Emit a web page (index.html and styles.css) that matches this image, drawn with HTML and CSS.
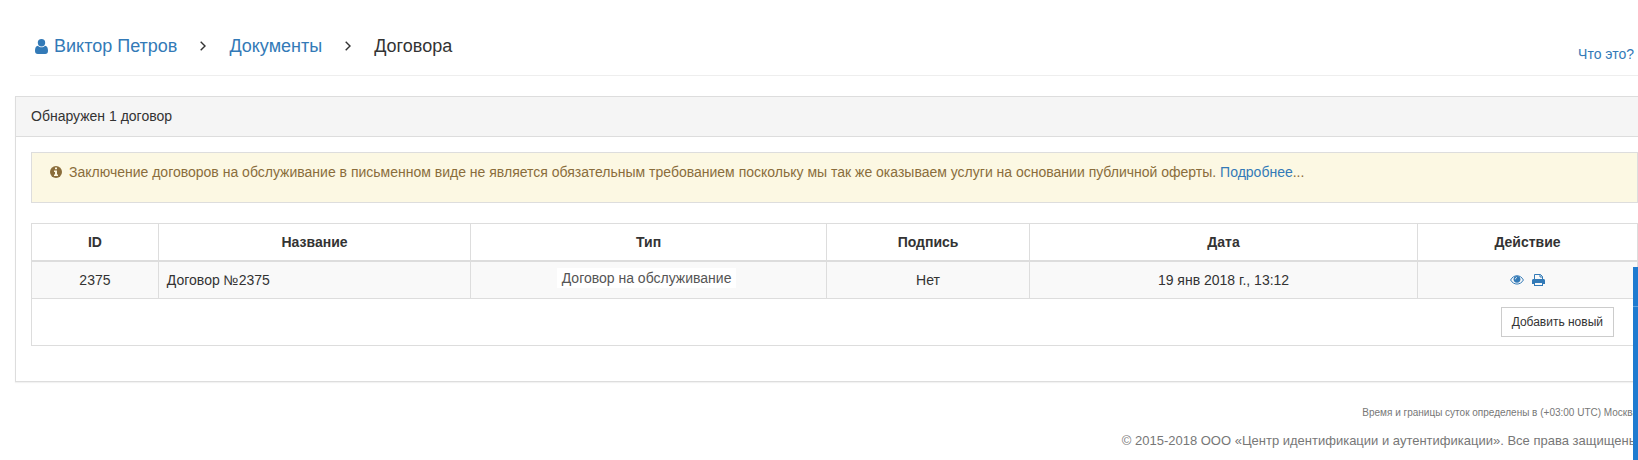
FILE: index.html
```html
<!DOCTYPE html>
<html lang="ru">
<head>
<meta charset="utf-8">
<title>Договора</title>
<link rel="stylesheet" href="styles.css">
</head>
<body>
<header class="page-header">
  <nav class="breadcrumb" aria-label="Навигация">
    <a class="user-link" href="#"><svg class="icon-user" viewBox="0 0 13 15" aria-hidden="true"><circle cx="6.5" cy="3.7" r="3.7"/><path d="M3 6.700C.8 6.900 0 9 0 11.800C0 14 1 15 2.800 15H10.200C12 15 13 14 13 11.800C13 9 12.200 6.900 10 6.700C8 8.700 5 8.700 3 6.700Z"/></svg>Виктор Петров</a>
    <svg class="chevron" viewBox="0 0 6 10" aria-hidden="true"><path d="M.7.7 5 5 .7 9.300"/></svg>
    <a href="#">Документы</a>
    <svg class="chevron" viewBox="0 0 6 10" aria-hidden="true"><path d="M.7.7 5 5 .7 9.300"/></svg>
    <span>Договора</span>
  </nav>
  <a class="help-link" href="#">Что это?</a>
</header>
<main class="panel">
  <div class="panel-heading">Обнаружен 1 договор</div>
  <div class="panel-body">
    <div class="alert">
      <svg class="icon-info" viewBox="0 0 12 12" aria-hidden="true"><circle cx="6" cy="6" r="6"/><path d="M5 1.500H7V3.200H5ZM4 4.500H7V8.500H8V10H4V8.500H5V6H4Z"/></svg>
      <p>Заключение договоров на обслуживание в письменном виде не является обязательным требованием поскольку мы так же оказываем услуги на основании публичной оферты. <a href="#">Подробнее</a>...</p>
    </div>
    <table class="contracts">
      <colgroup><col class="col-id"><col class="col-name"><col class="col-type"><col class="col-sign"><col class="col-date"><col class="col-action"></colgroup>
      <thead>
        <tr><th>ID</th><th>Название</th><th>Тип</th><th>Подпись</th><th>Дата</th><th>Действие</th></tr>
      </thead>
      <tbody>
        <tr>
          <td>2375</td>
          <td class="name">Договор №2375</td>
          <td class="type"><span class="type-label">Договор на обслуживание</span></td>
          <td>Нет</td>
          <td>19 янв 2018 г., 13:12</td>
          <td>
            <div class="actions">
              <a href="#" aria-label="Просмотр"><svg class="icon-eye" viewBox="0 0 14 10" aria-hidden="true"><path class="line" d="M.6 5C3.500-.7 10.500-.7 13.400 5C10.500 10.400 3.500 10.400.6 5Z"/><circle cx="7" cy="4.300" r="3.400"/><path class="glint" d="M5.300 4.300C5.300 3.200 6 2.600 7 2.600"/></svg></a>
              <a href="#" aria-label="Печать"><svg class="icon-print" viewBox="0 0 13 12" aria-hidden="true"><path class="line" d="M2.500 6V.5H8.500L10.500 2.500V6M8 .5V3H10.500"/><path fill-rule="evenodd" d="M1.500 5H11.500C12.400 5 13 5.600 13 6.500V10H11V12H2V10H0V6.500C0 5.600.6 5 1.500 5ZM3 9V11H10V9Z"/></svg></a>
            </div>
          </td>
        </tr>
      </tbody>
      <tfoot>
        <tr><td class="add-cell" colspan="6"><button class="btn" type="button">Добавить новый</button></td></tr>
      </tfoot>
    </table>
  </div>
</main>
<footer class="footer">
  <p class="timezone">Время и границы суток определены в (+03:00 UTC) Москва</p>
  <p class="copyright">© 2015-2018 ООО «Центр идентификации и аутентификации». Все права защищены</p>
</footer>
<div class="side-tab" aria-hidden="true"></div>
</body>
</html>
```
FILE: styles.css
```css
* { box-sizing: border-box; }

body {
  margin: 0;
  overflow: hidden;
  background: #fff;
  color: #333;
  font: 14px/20px "Liberation Sans", Arial, sans-serif;
}

p { margin: 0; }
a { color: #337ab7; text-decoration: none; }
svg { display: block; fill: currentColor; }
.line { fill: none; stroke: currentColor; }

.page-header {
  display: flex;
  justify-content: space-between;
  align-items: flex-end;
  margin-left: 30px;
  padding: 36px 4px 11px 5px;
  border-bottom: 1px solid #eee;
}

.breadcrumb {
  display: flex;
  align-items: center;
  gap: 23px;
  padding-bottom: 8px;
  font-size: 18px;
}

.user-link { display: flex; align-items: center; gap: 6px; }
.icon-user { width: 13px; height: 15px; }
.chevron { width: 6px; height: 10px; fill: none; stroke: #333; stroke-width: 1.4; }

.panel {
  margin: 20px -16px 0 15px;
  border: 1px solid #ddd;
  box-shadow: 0 1px 1px rgba(0, 0, 0, .05);
}

.panel-heading {
  padding: 9px 15px 10px;
  border-bottom: 1px solid #ddd;
  background: #f5f5f5;
}

.panel-body { padding: 15px 15px 35px; }

.alert {
  display: flex;
  gap: 7px;
  margin-bottom: 20px;
  padding: 9px 18px 20px;
  border: 1px solid #ddd;
  background: #fcf8e3;
  color: #8a6d3b;
}

.icon-info { flex: none; width: 12px; height: 12px; margin-top: 4px; }
.icon-info path { fill: #fcf8e3; }

.contracts {
  width: 100%;
  table-layout: fixed;
  border-collapse: collapse;
  text-align: center;
}

.contracts th, .contracts td { padding: 8px; border: 1px solid #ddd; }
.contracts th { border-bottom-width: 2px; }
.contracts tbody td { background: #f9f9f9; }
.contracts .name { text-align: left; }
.contracts .type { padding: 6px 12px 10px 8px; }
.type-label { display: inline-block; padding: 0 5px; background: #fff; color: #555; }

.col-id { width: 7.9%; }
.col-name { width: 19.45%; }
.col-type { width: 22.15%; }
.col-sign { width: 12.65%; }
.col-date { width: 24.15%; }
.col-action { width: 13.7%; }

.actions { display: flex; justify-content: center; align-items: center; gap: 8px; }
.icon-eye { width: 14px; height: 10px; }
.icon-print { width: 13px; height: 12px; }
.glint { fill: none; stroke: #f9f9f9; }

.contracts .add-cell { padding-right: 23px; text-align: right; }

.btn {
  display: inline-block;
  padding: 5px 10px;
  border: 1px solid #ccc;
  background: #fff;
  color: #333;
  font: 12px/18px "Liberation Sans", Arial, sans-serif;
  vertical-align: top;
}

.footer {
  padding-top: 21px;
  color: #777;
  text-align: right;
}

.timezone { font-size: 10px; white-space: nowrap; }
.copyright { padding-top: 8px; font-size: 13px; white-space: nowrap; }

.side-tab {
  position: fixed;
  right: 0;
  bottom: 0;
  width: 5px;
  height: 193px;
  background: linear-gradient(#1f7bd0 39px, #5fa3e0 39px, #5fa3e0 40px, #1f7bd0 40px);
}
```
